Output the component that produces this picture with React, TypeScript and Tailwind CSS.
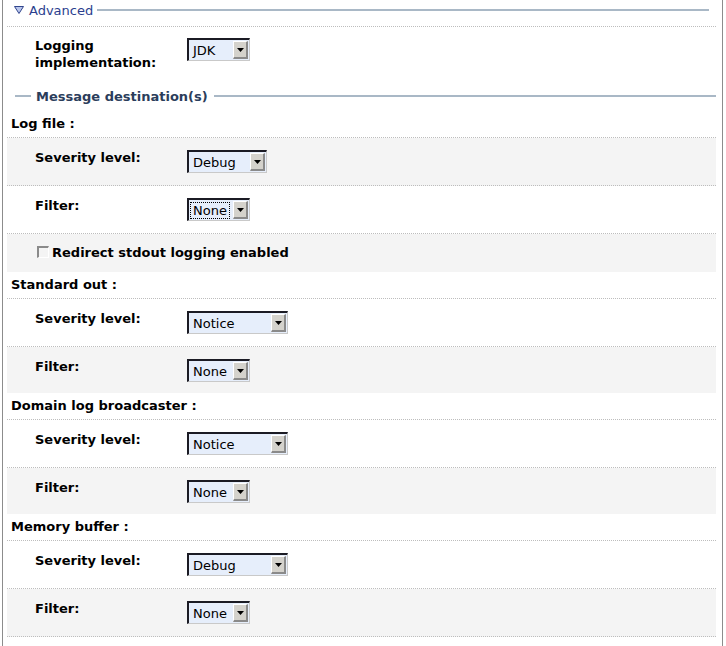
import type { ReactNode } from 'react';

const FONT = 'font-["DejaVu_Sans",Verdana,sans-serif]';

function Select({ value, width, focused }: { value: string; width: number; focused?: boolean }) {
  return (
    <div
      className="flex h-[23px] border-t-2 border-l-2 border-b border-r border-t-[#1b1b24] border-l-[#1b1b24] border-b-[#c9c9c9] border-r-[#c9c9c9] bg-[#e6eefb]"
      style={{ width }}
    >
      <div className="flex flex-1 items-center pl-[1px]">
        <span
          className={
            focused
              ? 'border border-dotted border-black px-[2px] text-[13px] leading-[15px] text-black'
              : 'border border-transparent px-[2px] text-[13px] leading-[15px] text-black'
          }
        >
          {value}
        </span>
      </div>
      <div className="my-[1px] mr-[1px] flex w-[15px] items-center justify-center border-t border-l border-b-2 border-r-2 border-t-white border-l-white border-b-[#8a8a8a] border-r-[#8a8a8a] bg-[#d4d2cc]">
        <svg width="7" height="4" viewBox="0 0 7 4">
          <path d="M0 0h7L3.5 4z" fill="#000" />
        </svg>
      </div>
    </div>
  );
}

function Row({
  label,
  gray,
  last,
  children,
}: {
  label: string;
  gray?: boolean;
  last?: boolean;
  children: ReactNode;
}) {
  const bg = gray ? 'bg-[#f4f4f4]' : 'bg-white';
  return (
    <div
      className={
        last
          ? `flex h-[46px] ${bg}`
          : `flex h-[48px] border-b border-dotted border-[#bdbdbd] ${bg}`
      }
    >
      <div className="w-[180px] pl-[28px] pt-[11px] text-[13px] font-bold leading-[17px] text-black">
        {label}
      </div>
      <div className="pt-[12px]">{children}</div>
    </div>
  );
}

function SectionHead({ title }: { title: string }) {
  return (
    <div className="flex h-[27px] items-start border-b border-dotted border-[#bdbdbd] pl-[4px] pt-[4px] text-[13px] font-bold leading-[18px] text-black">
      {title}
    </div>
  );
}

export default function App() {
  return (
    <div className={`h-[646px] w-[726px] overflow-hidden bg-white ${FONT}`}>
      <div className="ml-[2px] h-full w-[721px] border-l border-r border-[#8c8c8c] pl-[4px] pr-[6px]">
        {/* Advanced legend */}
        <div className="flex h-[27px] items-start border-b border-dotted border-[#bdbdbd]">
          <div className="flex h-[20px] w-full items-center pl-[7px]">
            <svg width="10" height="8" viewBox="0 0 10 8" className="mt-[-1px]">
              <path d="M0.5 0.5h9L5 7.5z" fill="#b9c6ec" stroke="#31458c" strokeWidth="1" />
            </svg>
            <span className="ml-[5px] text-[13px] leading-[17px] text-[#2a3e8e]">Advanced</span>
            <div className="ml-[4px] mr-[7px] h-[2px] flex-1 bg-[#a9b8c6]" />
          </div>
        </div>

        {/* Logging implementation */}
        <div className="flex h-[56px]">
          <div className="w-[180px] pl-[28px] pt-[10px] text-[13px] font-bold leading-[17px] text-black">
            Logging
            <br />
            implementation:
          </div>
          <div className="pt-[11px]">
            <Select value="JDK" width={63} />
          </div>
        </div>

        {/* Message destination legend */}
        <div className="mt-[1px] flex h-[24px] items-center">
          <div className="ml-[8px] h-[2px] w-[16px] bg-[#a9b8c6]" />
          <span className="ml-[5px] text-[13px] font-bold leading-[17px] text-[#2b3d5b]">
            Message destination(s)
          </span>
          <div className="ml-[6px] h-[2px] flex-1 bg-[#a9b8c6]" />
        </div>
        <div className="h-[3px]" />

        <SectionHead title="Log file :" />
        <Row label="Severity level:" gray>
          <Select value="Debug" width={80} />
        </Row>
        <Row label="Filter:">
          <Select value="None" width={63} focused />
        </Row>
        <div className="flex h-[38px] items-start bg-[#f4f4f4] pl-[30px] pt-[10px]">
          <div className="mt-[2px] h-[12px] w-[12px] border-t-2 border-l-2 border-t-[#8a8a8a] border-l-[#8a8a8a] border-b border-r border-b-white border-r-white bg-[#f4f4f4]" />
          <span className="ml-[3px] text-[13px] font-bold leading-[17px] text-black">
            Redirect stdout logging enabled
          </span>
        </div>

        <SectionHead title="Standard out :" />
        <Row label="Severity level:">
          <Select value="Notice" width={101} />
        </Row>
        <Row label="Filter:" gray last>
          <Select value="None" width={63} />
        </Row>

        <SectionHead title="Domain log broadcaster :" />
        <Row label="Severity level:">
          <Select value="Notice" width={101} />
        </Row>
        <Row label="Filter:" gray last>
          <Select value="None" width={63} />
        </Row>

        <SectionHead title="Memory buffer :" />
        <Row label="Severity level:">
          <Select value="Debug" width={101} />
        </Row>
        <Row label="Filter:" gray>
          <Select value="None" width={63} />
        </Row>
      </div>
    </div>
  );
}
